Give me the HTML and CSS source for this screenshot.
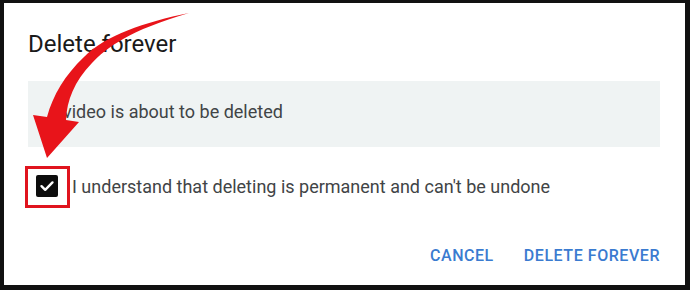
FILE: index.html
```html
<!DOCTYPE html>
<html lang="en">
<head>
<meta charset="utf-8">
<title>Delete forever</title>
<link rel="stylesheet" href="styles.css">
</head>
<body>
<div class="frame">
  <h1 class="title">Delete forever</h1>
  <div class="notice">video is about to be deleted</div>
  <label class="confirm">
    <span class="highlight">
      <span class="checkbox">
        <svg width="22" height="22" viewBox="0 0 22 22"><path d="M5.5 11.2 L9.2 14.8 L16.5 7.4" fill="none" stroke="#fff" stroke-width="2.4" stroke-linecap="round" stroke-linejoin="round"/></svg>
      </span>
    </span>
    <span class="label-text">I understand that deleting is permanent and can't be undone</span>
  </label>
  <div class="actions">
    <button class="btn">CANCEL</button>
    <button class="btn">DELETE FOREVER</button>
  </div>
  <svg class="arrow" width="690" height="290" viewBox="0 0 690 290">
    <path d="M189 13 C145 22 104 36 84 57 C65 75 53 95 47 117 L33 115 L47 158 L79 122 L66 120 C67 100 74 82 92 63 C106 48 130 30 189 13 Z" fill="#e8141a"/>
  </svg>
</div>
</body>
</html>
```
FILE: styles.css
```css
html, body {
  margin: 0;
  padding: 0;
  background: #fff;
}
.frame {
  position: relative;
  width: 690px;
  height: 290px;
  box-sizing: border-box;
  border-style: solid;
  border-color: #111;
  border-width: 3px 5px 5px 4px;
  padding: 25px 25px 0 24px;
  font-family: Roboto, "Liberation Sans", sans-serif;
  overflow: hidden;
}
.title {
  margin: 0;
  font-size: 24px;
  line-height: 32px;
  font-weight: 400;
  color: #1a1a1a;
}
.notice {
  margin-top: 21px;
  height: 66px;
  box-sizing: border-box;
  padding: 19px 0 0 35px;
  background: #eff3f3;
  font-size: 18px;
  line-height: 24px;
  color: #414446;
}
.confirm {
  display: flex;
  align-items: center;
  margin-top: 19px;
  margin-left: -3px;
  gap: 2px;
}
.highlight {
  display: flex;
  border: 3px solid #e0141e;
  padding: 6px 9px 8px 8px;
}
.checkbox {
  display: flex;
  width: 22px;
  height: 22px;
  background: #0d0d0d;
  border-radius: 2px;
}
.label-text {
  font-size: 18px;
  line-height: 24px;
  color: #414446;
}
.actions {
  display: flex;
  justify-content: flex-end;
  gap: 30px;
  margin-top: 38px;
}
.btn {
  border: 0;
  padding: 0;
  background: none;
  font-family: Roboto, "Liberation Sans", sans-serif;
  font-size: 16px;
  line-height: 20px;
  font-weight: 500;
  color: #3a7bd0;
  letter-spacing: 0.55px;
}
.arrow {
  position: absolute;
  left: -4px;
  top: -3px;
  pointer-events: none;
}
```
